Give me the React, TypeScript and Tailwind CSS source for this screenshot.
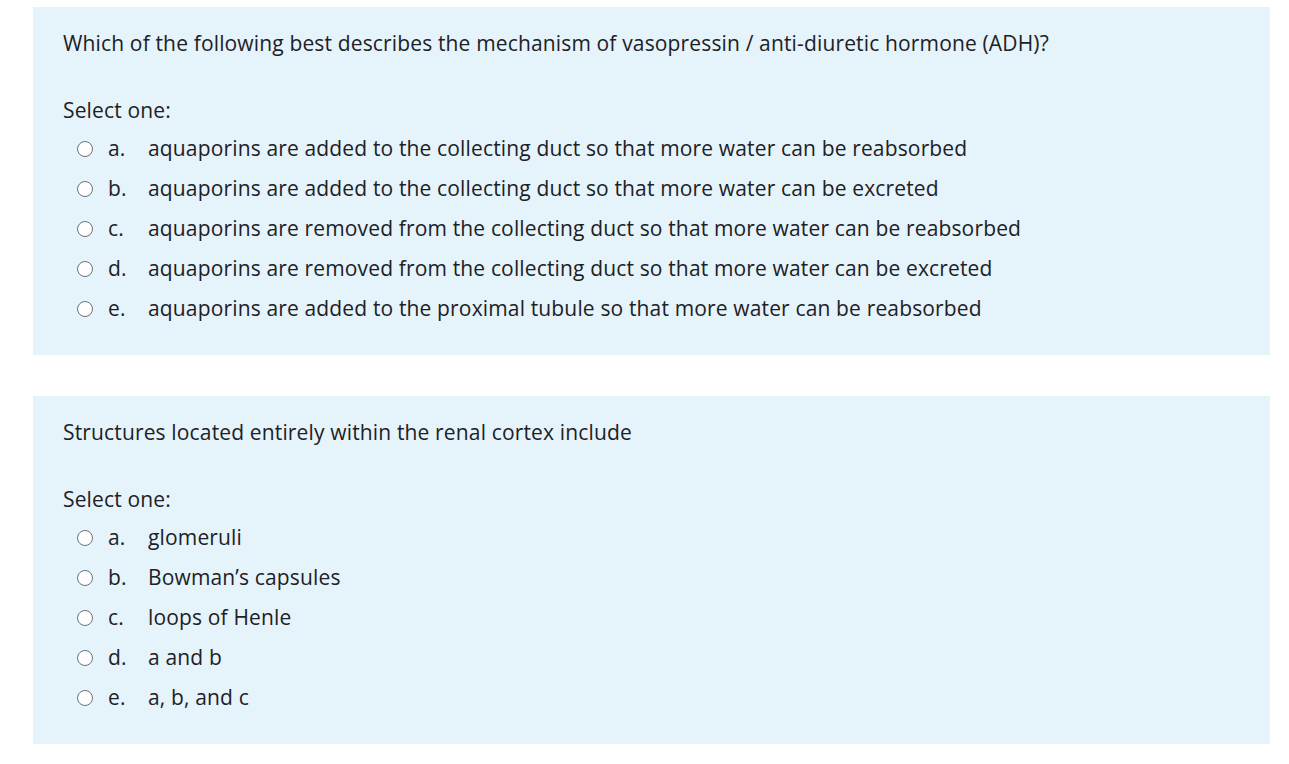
const questions = [
  {
    text: 'Which of the following best describes the mechanism of vasopressin / anti-diuretic hormone (ADH)?',
    options: [
      'aquaporins are added to the collecting duct so that more water can be reabsorbed',
      'aquaporins are added to the collecting duct so that more water can be excreted',
      'aquaporins are removed from the collecting duct so that more water can be reabsorbed',
      'aquaporins are removed from the collecting duct so that more water can be excreted',
      'aquaporins are added to the proximal tubule so that more water can be reabsorbed',
    ],
  },
  {
    text: 'Structures located entirely within the renal cortex include',
    options: ['glomeruli', 'Bowman\u2019s capsules', 'loops of Henle', 'a and b', 'a, b, and c'],
  },
];

const letters = ['a.', 'b.', 'c.', 'd.', 'e.'];

const App = () => {
  return (
    <div
      className="min-h-screen bg-white pt-[7px] text-[#1d2125]"
      style={{ fontFamily: '"Open Sans", "Noto Sans", sans-serif' }}
    >
      <div className="flex flex-col gap-[41px]">
        {questions.map((q, qi) => (
          <div key={qi} className="ml-[33px] w-[1237px] bg-[#e5f3fb] px-[30px] pt-[21px] pb-[26px]">
            <p className="text-[21px] leading-[30px] tracking-[0.15px]">{q.text}</p>
            <p className="mt-[37px] text-[21px] leading-[30px] tracking-[0.15px]">Select one:</p>
            <div className="mt-[4px] flex flex-col">
              {q.options.map((opt, i) => (
                <label key={i} className="flex h-10 items-center text-[21px] tracking-[0.15px]">
                  <span className="ml-[14px] inline-block h-[16px] w-[16px] rounded-full border-[1.5px] border-[#6b7178] bg-white" />
                  <span className="ml-[15px] w-[40px]">{letters[i]}</span>
                  <span>{opt}</span>
                </label>
              ))}
            </div>
          </div>
        ))}
      </div>
    </div>
  );
};

export default App;
